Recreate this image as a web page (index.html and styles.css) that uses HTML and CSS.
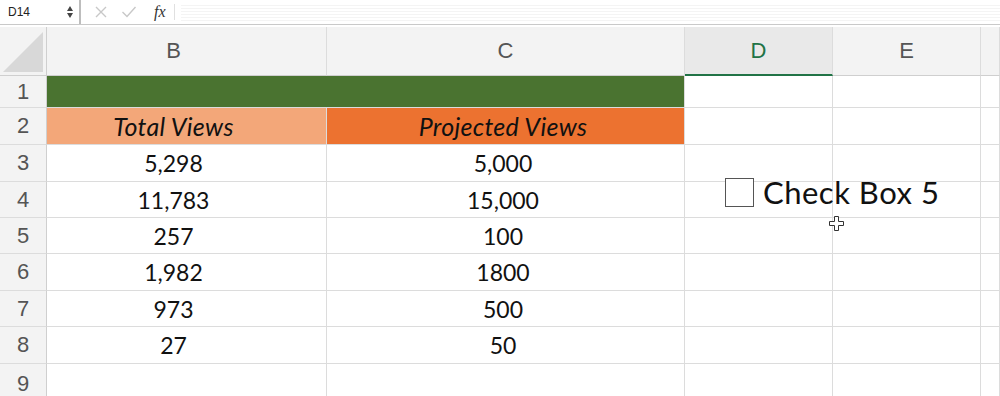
FILE: index.html
```html
<!DOCTYPE html>
<html lang="en">
<head>
    <meta charset="UTF-8">
    <title>Check Box 5</title>
    <link rel="stylesheet" href="styles.css">
</head>
<body>
    <div class="formula-bar">
        <div class="name-box">D14</div>
        <svg class="stepper" width="8" height="14" viewBox="0 0 8 14"><path d="M1 6 L4 1 L7 6 Z M1 8 L4 13 L7 8 Z" fill="#444"/></svg>
        <div class="bar-sep"></div>
        <svg class="bar-icon" width="14" height="14" viewBox="0 0 14 14"><path d="M2 2 L12 12 M12 2 L2 12" stroke="#c8c8c8" stroke-width="1.4"/></svg>
        <svg class="bar-icon" width="16" height="14" viewBox="0 0 16 14"><path d="M1.5 7 L6 11.5 L14.5 2" stroke="#c8c8c8" stroke-width="1.4" fill="none"/></svg>
        <span class="fx">fx</span>
        <div class="bar-sep light"></div>
        <div class="formula-input"></div>
    </div>

    <div class="sheet">
        <div class="corner"><div class="corner-tri"></div></div>
        <div class="col-head col-b">B</div>
        <div class="col-head">C</div>
        <div class="col-head active">D</div>
        <div class="col-head">E</div>
        <div class="col-head"></div>

        <div class="row-head">1</div>
        <div class="cell title-band"></div>
        <div class="cell"></div>
        <div class="cell"></div>
        <div class="cell"></div>

        <div class="row-head">2</div>
        <div class="cell label light-orange col-b">Total Views</div>
        <div class="cell label dark-orange col-c">Projected Views</div>
        <div class="cell"></div>
        <div class="cell"></div>
        <div class="cell"></div>

        <div class="row-head">3</div>
        <div class="cell col-b">5,298</div>
        <div class="cell col-c">5,000</div>
        <div class="cell"></div>
        <div class="cell"></div>
        <div class="cell"></div>

        <div class="row-head">4</div>
        <div class="cell col-b">11,783</div>
        <div class="cell col-c">15,000</div>
        <div class="cell"></div>
        <div class="cell"></div>
        <div class="cell"></div>

        <div class="row-head">5</div>
        <div class="cell col-b">257</div>
        <div class="cell col-c">100</div>
        <div class="cell"></div>
        <div class="cell"></div>
        <div class="cell"></div>

        <div class="row-head">6</div>
        <div class="cell col-b">1,982</div>
        <div class="cell col-c">1800</div>
        <div class="cell"></div>
        <div class="cell"></div>
        <div class="cell"></div>

        <div class="row-head">7</div>
        <div class="cell col-b">973</div>
        <div class="cell col-c">500</div>
        <div class="cell"></div>
        <div class="cell"></div>
        <div class="cell"></div>

        <div class="row-head">8</div>
        <div class="cell col-b">27</div>
        <div class="cell col-c">50</div>
        <div class="cell"></div>
        <div class="cell"></div>
        <div class="cell"></div>

        <div class="row-head">9</div>
        <div class="cell"></div>
        <div class="cell"></div>
        <div class="cell"></div>
        <div class="cell"></div>
        <div class="cell"></div>

        <!-- control flotante sobre la hoja -->
        <label class="checkbox-control">
            <span class="check-square"></span>
            <span class="check-text">Check Box 5</span>
        </label>
        <svg class="move-cursor" width="15" height="15" viewBox="0 0 15 15">
            <path d="M5.5 0.5 H9.5 V5.5 H14.5 V9.5 H9.5 V14.5 H5.5 V9.5 H0.5 V5.5 H5.5 Z" fill="#fff" stroke="#333" stroke-width="1"/>
        </svg>
    </div>
</body>
</html>
```

FILE: styles.css
```css
/* Hoja de cálculo */
body {
    margin: 0;
    background: #fff;
    font-family: 'Lato', sans-serif;
    overflow: hidden;
}

.formula-bar {
    display: flex;
    align-items: center;
    height: 24px;
    border-bottom: 1px solid #c9c9c9;
    margin-bottom: 2px;
    font-family: 'Liberation Sans', sans-serif;
}
.name-box {
    width: 58px;
    padding-left: 8px;
    font-size: 12px;
    color: #222;
}
.stepper {
    margin-right: 5px;
}
.bar-sep {
    width: 2px;
    height: 24px;
    background: #bdbdbd;
    margin-right: 13px;
}
.bar-sep.light {
    width: 1px;
    height: 16px;
    background: #e0e0e0;
    margin-left: 8px;
    margin-right: 0;
}
.bar-icon {
    margin-right: 13px;
}
.fx {
    font-family: 'Liberation Serif', serif;
    font-style: italic;
    font-size: 16px;
    color: #333;
    margin-left: 4px;
}
.formula-input {
    flex: 1;
    height: 18px;
    margin-left: 6px;
    background: repeating-linear-gradient(#fff 0 2px, #f4f4f4 2px 3px);
}

.sheet {
    position: relative;
    display: grid;
    grid-template-columns: 47px 280px 358px 148px 148px 1fr;
    grid-template-rows: 49px 32px 37px 37px 36px 36px 37px 36px 37px 40px;
}

.corner {
    background: #f3f3f3;
    border-right: 1px solid #cfcfcf;
    border-bottom: 1px solid #cfcfcf;
    position: relative;
}
.corner-tri {
    position: absolute;
    right: 3px;
    bottom: 3px;
    width: 40px;
    height: 40px;
    background: #d8d8d8;
    clip-path: polygon(100% 0, 100% 100%, 0 100%);
}

.col-head {
    display: flex;
    align-items: center;
    justify-content: center;
    background: #f3f3f3;
    border-right: 1px solid #dcdcdc;
    border-bottom: 1px solid #cfcfcf;
    font-family: 'Liberation Sans', sans-serif;
    font-size: 22px;
    color: #555;
}
.col-head.active {
    background: #e9e9e9;
    color: #217346;
    border-bottom: 2px solid #217346;
}

.row-head {
    display: flex;
    align-items: center;
    justify-content: center;
    background: #f3f3f3;
    border-right: 1px solid #cfcfcf;
    border-bottom: 1px solid #dcdcdc;
    font-family: 'Liberation Sans', sans-serif;
    font-size: 22px;
    color: #555;
}

.cell {
    border-right: 1px solid #dcdcdc;
    border-bottom: 1px solid #dcdcdc;
    display: flex;
    align-items: center;
    justify-content: center;
    font-size: 23px;
    color: #111;
}
.col-b {
    padding-right: 26px;
}
.col-c {
    padding-right: 5px;
}
.title-band {
    grid-column: span 2;
    background: #4a7330;
}
.label {
    font-style: italic;
    font-size: 25px;
    letter-spacing: 0.3px;
}
.light-orange {
    background: #f3a779;
}
.dark-orange {
    background: #ec7230;
}

.checkbox-control {
    position: absolute;
    left: 725px;
    top: 146px;
    display: flex;
    align-items: center;
    gap: 9px;
}
.check-square {
    width: 27px;
    height: 27px;
    border: 1.5px solid #555;
    background: #fff;
}
.check-text {
    font-family: 'Lato', sans-serif;
    font-size: 31px;
    color: #111;
    letter-spacing: 0.5px;
}
.move-cursor {
    position: absolute;
    left: 829px;
    top: 189px;
}
```
